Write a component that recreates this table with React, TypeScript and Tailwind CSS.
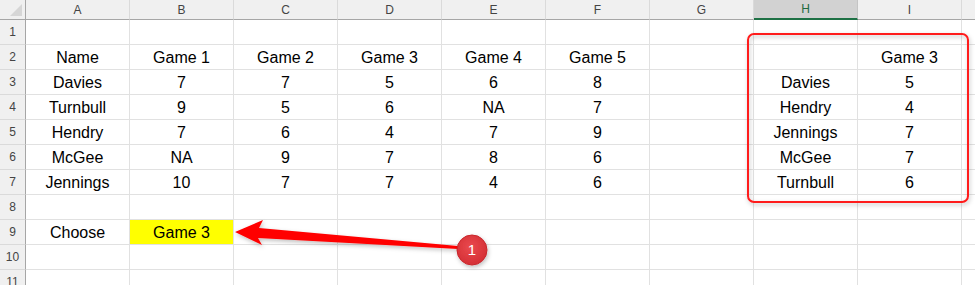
import React from "react";

const cols = ["A", "B", "C", "D", "E", "F", "G", "H", "I"];

// sheet contents, keyed by row number; each row lists columns A..I
const rows: Record<number, string[]> = {
  2: ["Name", "Game 1", "Game 2", "Game 3", "Game 4", "Game 5", "", "", "Game 3"],
  3: ["Davies", "7", "7", "5", "6", "8", "", "Davies", "5"],
  4: ["Turnbull", "9", "5", "6", "NA", "7", "", "Hendry", "4"],
  5: ["Hendry", "7", "6", "4", "7", "9", "", "Jennings", "7"],
  6: ["McGee", "NA", "9", "7", "8", "6", "", "McGee", "7"],
  7: ["Jennings", "10", "7", "7", "4", "6", "", "Turnbull", "6"],
  9: ["Choose", "Game 3"],
};

function Corner() {
  return (
    <div className="relative bg-[#f0f0f0] border-r border-b border-[#a6a6a6]">
      <svg className="absolute right-[3px] bottom-[3px]" width="12" height="12" viewBox="0 0 12 12">
        <polygon points="12,0 12,12 0,12" fill="#d6d6d6" />
      </svg>
    </div>
  );
}

function ColHeader({ label }: { label: string }) {
  const active = label === "H";
  return (
    <div
      className={`flex items-center justify-center text-[12px] border-r ${
        active
          ? "bg-[#d2d2d2] text-[#1e6b41] border-[#c4c4c4] border-b-2 border-b-[#1e7145]"
          : "bg-[#f0f0f0] text-[#444] border-[#dadada] border-b border-b-[#a6a6a6]"
      }`}
    >
      {label}
    </div>
  );
}

function Cell({ value, highlight }: { value: string; highlight?: boolean }) {
  return (
    <div
      className={`flex items-end justify-center pb-[3px] text-[16px] leading-none text-black border-r border-b border-[#e1e1e1] ${
        highlight ? "bg-[#ffff00]" : "bg-white"
      }`}
    >
      {value}
    </div>
  );
}

function Annotations() {
  return (
    <svg className="absolute inset-0 pointer-events-none" width="975" height="285">
      <defs>
        <filter id="shade" x="-20%" y="-20%" width="140%" height="140%">
          <feDropShadow dx="1" dy="2" stdDeviation="2" floodColor="#000" floodOpacity="0.25" />
        </filter>
        <radialGradient id="dot" cx="45%" cy="40%" r="60%">
          <stop offset="0%" stopColor="#ea4a4e" />
          <stop offset="100%" stopColor="#d42f35" />
        </radialGradient>
      </defs>
      <rect x="748" y="34" width="220" height="168" rx="6" fill="none" stroke="#ff1a1a" strokeWidth="2" filter="url(#shade)" />
      <polygon
        points="235,232 263,220 259,228 458,246 458,249 258,238 262,245"
        fill="#ff0000"
        filter="url(#shade)"
      />
      <circle cx="472" cy="250" r="15" fill="url(#dot)" stroke="#c8262c" strokeWidth="1" filter="url(#shade)" />
      <text x="472" y="255" textAnchor="middle" fill="#fff" fontSize="15" fontFamily="'Liberation Sans', Arial, sans-serif">
        1
      </text>
    </svg>
  );
}

export default function App() {
  const rowNums = Array.from({ length: 11 }, (_, i) => i + 1);

  return (
    <div className="relative w-[975px] h-[285px] overflow-hidden bg-white font-['Liberation_Sans',Arial,sans-serif]">
      <div className="grid grid-cols-[26px_repeat(9,104px)_1fr] grid-rows-[20px_repeat(11,25px)]">
        <Corner />
        {cols.map((c) => (
          <ColHeader key={c} label={c} />
        ))}
        <div className="bg-[#f0f0f0] border-b border-[#a6a6a6]" />

        {rowNums.map((r) => {
          const data = rows[r] ?? [];
          return (
            <React.Fragment key={r}>
              <div className="flex items-center justify-center text-[12px] text-[#444] bg-[#f0f0f0] border-r border-r-[#a6a6a6] border-b border-b-[#dadada]">
                {r}
              </div>
              {cols.map((c, i) => (
                <Cell key={c} value={data[i] ?? ""} highlight={r === 9 && c === "B"} />
              ))}
              <div className="bg-white border-b border-[#e1e1e1]" />
            </React.Fragment>
          );
        })}
      </div>
      <Annotations />
    </div>
  );
}
